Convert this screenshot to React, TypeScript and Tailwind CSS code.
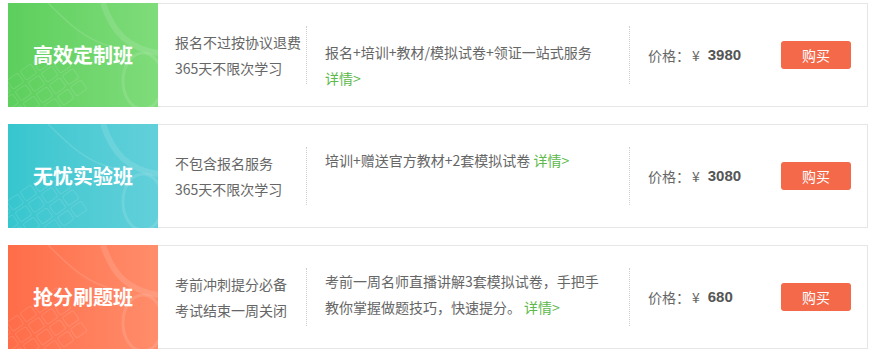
const plans = [
  {
    title: "高效定制班",
    bg: "bg-gradient-to-r from-[#5ccf5d] to-[#7fdc7a]",
    lines: ["报名不过按协议退费", "365天不限次学习"],
    desc: ["报名+培训+教材/模拟试卷+领证一站式服务 "],
    descTop: "mt-[13px]",
    linkGap: "ml-0",
    price: "3980",
  },
  {
    title: "无忧实验班",
    bg: "bg-gradient-to-r from-[#36c6ce] to-[#62d0da]",
    lines: ["不包含报名服务", "365天不限次学习"],
    desc: ["培训+赠送官方教材+2套模拟试卷 "],
    descTop: "mt-0",
    linkGap: "ml-0",
    price: "3080",
  },
  {
    title: "抢分刷题班",
    bg: "bg-gradient-to-r from-[#ff6c48] to-[#ff8d6b]",
    lines: ["考前冲刺提分必备", "考试结束一周关闭"],
    desc: ["考前一周名师直播讲解3套模拟试卷，手把手", "教你掌握做题技巧，快速提分。"],
    descTop: "mt-0",
    linkGap: "ml-[3px]",
    price: "680",
  },
];

function Deco() {
  // faint keyboard + mouse picture behind the title
  return (
    <svg
      className="absolute inset-0 h-full w-full"
      viewBox="0 0 150 104"
      fill="none"
      stroke="white"
      strokeOpacity="0.12"
    >
      <g transform="rotate(-35 30 80)">
        {[0, 1, 2, 3].map((r) =>
          [0, 1, 2, 3, 4].map((c) => (
            <rect
              key={`${r}-${c}`}
              x={-10 + c * 16}
              y={60 + r * 14}
              width="13"
              height="11"
              rx="2"
            />
          ))
        )}
      </g>
      <path d="M95 0 C105 30 120 45 150 50" strokeWidth="6" />
      <ellipse cx="135" cy="78" rx="20" ry="28" strokeWidth="3" />
      <path d="M40 0 C60 20 80 40 110 45" strokeWidth="1.5" />
    </svg>
  );
}

export default function App() {
  return (
    <div
      className="flex w-[872px] flex-col gap-[17px] bg-white px-[8px] pt-[3px] text-[#666]"
      style={{ fontFamily: '"Noto Sans CJK SC", "Noto Sans", sans-serif' }}
    >
      {plans.map((p) => (
        <div
          key={p.title}
          className="flex h-[104px] w-[860px] border-y border-r border-[#e6e6e6]"
        >
          <div
            className={`relative -my-px flex w-[150px] shrink-0 items-center justify-center overflow-hidden ${p.bg}`}
          >
            <Deco />
            <span className="relative text-[20px] font-bold text-white">
              {p.title}
            </span>
          </div>

          <div className="w-[148px] shrink-0 self-center pl-[17px] text-[14px] leading-[26px]">
            {p.lines.map((l) => (
              <div key={l} className="whitespace-nowrap">
                {l}
              </div>
            ))}
          </div>

          <div className="h-[58px] w-[323px] shrink-0 self-center border-l border-dotted border-[#cfcfcf] pl-[18px] pr-[22px]">
            <p className={`${p.descTop} text-[14px] leading-[26px]`}>
              {p.desc.map((d) => (
                <span key={d}>{d}</span>
              ))}
              <span className={`inline-block ${p.linkGap} text-[#5cb94a]`}>
                详情&gt;
              </span>
            </p>
          </div>

          <div className="flex h-[58px] shrink-0 items-center self-center border-l border-dotted border-[#cfcfcf] pl-[18px] text-[14px]">
            <span>价格：</span>
            <span className="ml-[2px]">¥</span>
            <span
              className="ml-[8px] text-[15px] font-bold text-[#555]"
              style={{ fontFamily: '"Liberation Sans", sans-serif' }}
            >
              {p.price}
            </span>
          </div>

          <button className="ml-auto mr-[16px] h-[28px] w-[70px] self-center rounded-[3px] bg-[#f4694a] text-[14px] text-white">
            购买
          </button>
        </div>
      ))}
    </div>
  );
}
